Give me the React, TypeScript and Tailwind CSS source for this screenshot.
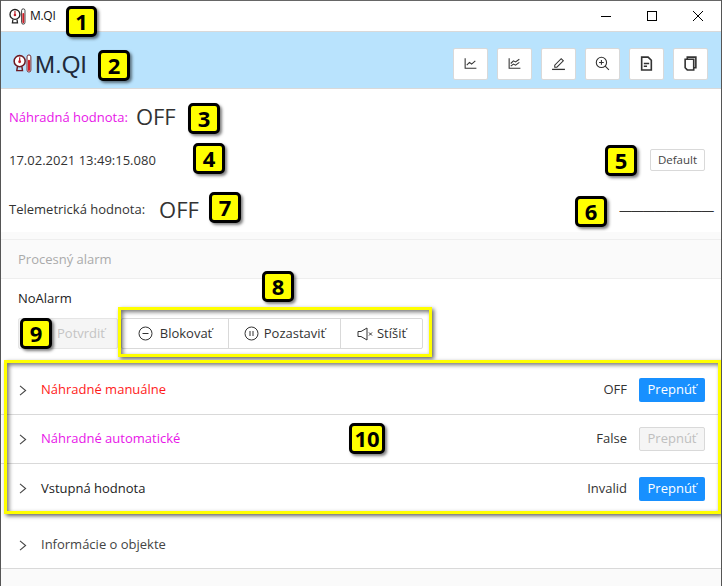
import type { ReactNode } from "react";

function Logo({ size, ring }: { size: number; ring: string }) {
  return (
    <svg width={size} height={size} viewBox="0 0 20 20" fill="none">
      <circle cx="7" cy="7.5" r="5.8" stroke={ring} strokeWidth="1.6" fill="#fff" />
      <path d="M7 3.5v4" stroke="#c0202a" strokeWidth="1.4" />
      <circle cx="7" cy="8.2" r="1.5" fill="#c0202a" />
      <path d="M4.6 13.5 4 17.5h6l-.6-4" stroke={ring} strokeWidth="1.5" />
      <rect x="14.8" y="1" width="4" height="18" rx="2" fill="#fff" stroke={ring} strokeWidth="1" />
      <rect x="15.7" y="6" width="2.2" height="12" rx="1.1" fill="#d0202a" />
    </svg>
  );
}

function Badge({ n, className }: { n: number; className: string }) {
  return (
    <div
      className={`absolute h-[31px] flex items-center justify-center rounded-[5px] border-[3px] border-black bg-[#ffff00] text-[22px] font-bold text-black shadow-[2px_2px_3px_rgba(0,0,0,0.5)] font-['Open_Sans',sans-serif] ${className}`}
    >
      {n}
    </div>
  );
}

function ToolButton({ children }: { children: ReactNode }) {
  return (
    <button className="w-[35px] h-[32px] flex items-center justify-center bg-white border border-[#d9d9d9] rounded-[2px] text-[#333]">
      <svg width="15" height="15" viewBox="0 0 14 14" fill="none" stroke="currentColor" strokeWidth="1">
        {children}
      </svg>
    </button>
  );
}

function Row({
  label,
  color,
  value,
  disabled,
  last,
}: {
  label: string;
  color: string;
  value: string;
  disabled?: boolean;
  last?: boolean;
}) {
  return (
    <div className={`h-[49px] pl-[18px] pr-[16px] flex items-center ${last ? "" : "border-b border-[#d9d9d9]"}`}>
      <Chevron />
      <span className={`ml-[14px] ${color}`}>{label}</span>
      <span className="ml-auto text-[#333]">{value}</span>
      <button
        className={`ml-[12px] w-[66px] h-[24px] rounded-[2px] text-[13px] flex items-center justify-center ${
          disabled
            ? "bg-[#f5f5f5] border border-[#d9d9d9] text-[#bfbfbf]"
            : "bg-[#1890ff] text-white"
        }`}
      >
        Prepnúť
      </button>
    </div>
  );
}

function Chevron() {
  return (
    <svg width="8" height="11" viewBox="0 0 8 11" fill="none" stroke="#444" strokeWidth="1.1">
      <path d="M1 .8 6.6 5.5 1 10.2" />
    </svg>
  );
}

export default function App() {
  return (
    <div className="relative w-[722px] h-[586px] overflow-hidden bg-white border-l border-r border-[#555] text-[13px] text-[#222] font-['Open_Sans',sans-serif]">
      {/* title bar */}
      <div className="h-[31px] border-t border-[#666] flex items-center">
        <div className="ml-[8px] flex">
          <Logo size={17} ring="#222" />
        </div>
        <span className="ml-[4px] text-[12px] text-[#111] tracking-[-0.3px]">M.QI</span>
        <div className="ml-auto flex items-center text-black">
          <svg width="46" height="30" viewBox="0 0 46 30" stroke="currentColor" fill="none">
            <path d="M18 15.5h10" />
          </svg>
          <svg width="46" height="30" viewBox="0 0 46 30" stroke="currentColor" fill="none">
            <rect x="18.5" y="10.5" width="9" height="9" />
          </svg>
          <svg width="46" height="30" viewBox="0 0 46 30" stroke="currentColor" fill="none">
            <path d="M18 10l10 10M28 10 18 20" />
          </svg>
        </div>
      </div>

      {/* header */}
      <div className="h-[58px] bg-[#b9e3fd] border-t border-b border-[#d9d9d9] flex items-center pt-[7px] pl-[12px] pr-[13px]">
        <Logo size={19} ring="#6d1a22" />
        <span className="ml-[3px] mt-[3px] text-[24px] text-[#1f2a3a] font-['Liberation_Sans',sans-serif]">M.QI</span>
        <div className="ml-auto flex gap-[9px]">
          <ToolButton>
            <path d="M2 2v9.5h10.5" />
            <path d="M3.5 8.5 6 6l2 1.5 3.5-3" />
          </ToolButton>
          <ToolButton>
            <path d="M2 2v9.5h10.5" />
            <path d="M3.5 7 6 4.5l2 1 3.5-2.5M3.5 9.5 6 7.5l2 1 3.5-2.5" />
          </ToolButton>
          <ToolButton>
            <path d="M1 12.5h12" strokeWidth="1.2" />
            <path d="M3.5 10.5v-2L9.5 2.5l2 2-6 6z" />
          </ToolButton>
          <ToolButton>
            <circle cx="6" cy="6" r="4.8" />
            <path d="M9.5 9.5l3.5 3.5M6 3.8v4.4M3.8 6h4.4" />
          </ToolButton>
          <ToolButton>
            <path d="M2.5 1h6l3 3v9h-9z" strokeWidth="1.5" />
            <path d="M4.5 7h5M4.5 9.5h3" strokeWidth="1.3" />
          </ToolButton>
          <ToolButton>
            <path d="M4 3V1h8v10h-2" strokeWidth="1.5" />
            <path d="M2 3h8v10H4l-2-2z" strokeWidth="1.5" />
          </ToolButton>
        </div>
      </div>

      {/* values */}
      <div className="h-[143px]">
        <div className="pl-[8px] flex items-center h-[58px]">
          <span className="text-[#e815e8]">Náhradná hodnota:</span>
          <span className="ml-[8px] mb-[4px] text-[22px] text-[#333]">OFF</span>
        </div>
        <div className="pl-[8px] pr-[16px] flex items-center h-[26px] justify-between">
          <span className="mt-[1px] text-[#333]">17.02.2021 13:49:15.080</span>
          <button className="w-[55px] h-[22px] border border-[#d9d9d9] rounded-[2px] text-[11.5px] text-[#444]">Default</button>
        </div>
        <div className="pl-[8px] pr-[8px] pt-[14px] flex items-center h-[59px] justify-between">
          <div className="flex items-center">
            <span className="text-[#333]">Telemetrická hodnota:</span>
            <span className="ml-[14px] text-[22px] text-[#333]">OFF</span>
          </div>
          <span className="text-[#333] tracking-[-1.25px] mt-[3px]">————————</span>
        </div>
      </div>

      {/* alarm */}
      <div className="h-[7px] bg-[#fafafa]" />
      <div className="h-[40px] bg-[#fafafa] border-t border-b border-[#eeeeee] pl-[17px] pt-[2px] flex items-center text-[#aaa]">Procesný alarm</div>
      <div className="pl-[17px] h-[39px] flex items-center text-[#222]">NoAlarm</div>
      <div className="h-[31px] flex items-center">
        <button className="ml-[17px] w-[100px] h-[31px] pl-[38px] bg-[#f5f5f5] border border-[#e5e5e5] rounded-[2px] text-[#c4c4c4] text-left">Potvrdiť</button>
        <div className="ml-[3px] h-[31px] w-[302px] flex border border-[#d9d9d9] rounded-[2px] text-[#333]">
          <div className="w-[107px] flex items-center justify-center gap-[7px] border-r border-[#d9d9d9]">
            <svg width="15" height="15" viewBox="0 0 15 15" fill="none" stroke="#333">
              <circle cx="7.5" cy="7.5" r="6.5" />
              <path d="M4.5 7.5h6" />
            </svg>
            Blokovať
          </div>
          <div className="w-[112px] flex items-center justify-center gap-[5px] border-r border-[#d9d9d9]">
            <svg width="15" height="15" viewBox="0 0 15 15" fill="none" stroke="#333">
              <circle cx="7.5" cy="7.5" r="6.5" />
              <path d="M6 5v5M9 5v5" />
            </svg>
            Pozastaviť
          </div>
          <div className="flex-1 flex items-center justify-center gap-[3px]">
            <svg width="17" height="14" viewBox="0 0 17 13" fill="none" stroke="#333">
              <path d="M1 4v5h3l6 3.5V.5L4 4z" />
              <path d="M12 5l3 3M15 5l-3 3" />
            </svg>
            Stíšiť
          </div>
        </div>
      </div>

      {/* rows */}
      <div className="mt-[17px]">
        <Row label="Náhradné manuálne" color="text-[#ff1a1a]" value="OFF" />
        <Row label="Náhradné automatické" color="text-[#e815e8]" value="False" disabled />
        <Row label="Vstupná hodnota" color="text-[#222]" value="Invalid" last />
      </div>
      <div className="mt-[9px] h-[47px] pl-[18px] flex items-center border-b border-[#d9d9d9]">
        <Chevron />
        <span className="ml-[14px] text-[#444]">Informácie o objekte</span>
      </div>
      <div className="h-[20px] bg-[#fafafa]" />

      {/* annotation frames */}
      <div className="absolute left-[117px] top-[307px] w-[314px] h-[50px] border-[3px] border-[#ffff00] shadow-[2px_2px_4px_rgba(0,0,0,0.6),inset_2px_2px_4px_rgba(0,0,0,0.55)]" />
      <div className="absolute left-[3px] top-[360px] w-[717px] h-[154px] border-[3px] border-[#ffff00] shadow-[2px_2px_4px_rgba(0,0,0,0.6),inset_2px_2px_4px_rgba(0,0,0,0.55)]" />

      {/* annotation badges */}
      <Badge n={1} className="left-[65px] top-[6px] w-[31px]" />
      <Badge n={2} className="left-[97px] top-[50px] w-[32px]" />
      <Badge n={3} className="left-[187px] top-[103px] w-[32px]" />
      <Badge n={4} className="left-[192px] top-[143px] w-[32px]" />
      <Badge n={5} className="left-[604px] top-[145px] w-[32px]" />
      <Badge n={6} className="left-[574px] top-[196px] w-[32px]" />
      <Badge n={7} className="left-[208px] top-[192px] w-[32px]" />
      <Badge n={8} className="left-[261px] top-[271px] w-[32px]" />
      <Badge n={9} className="left-[19px] top-[318px] w-[32px]" />
      <Badge n={10} className="left-[348px] top-[423px] w-[36px]" />
    </div>
  );
}
